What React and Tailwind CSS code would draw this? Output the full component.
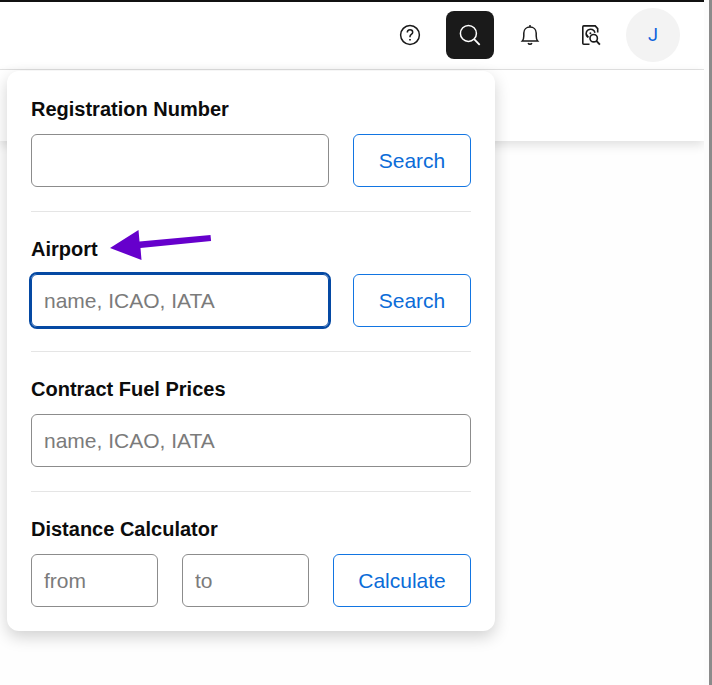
import React from "react";

const field =
  "h-[53px] w-full min-w-0 rounded-md border border-[#8c8c8c] bg-white px-3 text-[21px] text-[#222] placeholder:text-[#7b7b7b] outline-none";
const activeField =
  "h-[53px] w-full min-w-0 rounded-md border border-[#0549a3] bg-white px-3 text-[21px] text-[#222] placeholder:text-[#7b7b7b] outline-2 outline-[#0549a3]";
const action =
  "h-[53px] shrink-0 rounded-md border border-[#1275e2] bg-white text-[21px] text-[#0b6cd8]";
const iconButton = "flex size-12 items-center justify-center rounded-lg text-[#1a1a1a]";

function HelpIcon() {
  return (
    <svg width="24" height="24" viewBox="0 0 24 24" fill="none" stroke="currentColor" strokeWidth="1.5" aria-hidden="true">
      <circle cx="12" cy="12" r="9.4" />
      <path d="M9.3 9.5c0-1.700 1.100-2.800 2.700-2.800s2.700 1.100 2.700 2.500c0 2.200-2.700 2.200-2.700 4.300v.8" />
      <path d="M12 15.900v1.700" strokeWidth="1.700" />
    </svg>
  );
}

function SearchIcon() {
  return (
    <svg width="24" height="24" viewBox="0 0 24 24" fill="none" stroke="currentColor" strokeWidth="1.5" aria-hidden="true">
      <circle cx="10.400" cy="10.400" r="8" />
      <path d="m16.100 16.100 5.600 5.700" strokeWidth="1.800" />
    </svg>
  );
}

function BellIcon() {
  return (
    <svg width="24" height="24" viewBox="0 0 24 24" fill="none" stroke="currentColor" strokeWidth="1.500" aria-hidden="true">
      <path d="M12 1.900v2" />
      <path d="M4.300 17.900h15.400c-1.200-1.300-1.500-2.800-1.500-4.900v-3c0-3.500-2.600-6-6.200-6S5.800 6.500 5.800 10v3c0 2.100-.3 3.600-1.500 4.900Z" />
      <path d="M10.200 20c.3.900.9 1.300 1.800 1.300s1.500-.4 1.800-1.300" strokeWidth="1.600" />
    </svg>
  );
}

function RecordSearchIcon() {
  return (
    <svg width="24" height="24" viewBox="0 0 24 24" fill="none" stroke="currentColor" strokeWidth="1.600" aria-hidden="true">
      <path d="M11.500 21.200H5.800c-.6 0-1-.4-1-1V3.900c0-.6.4-1 1-1h11.400l2.500 2.700v4" />
      <path d="M9.900 14.300A4.500 4.500 0 1 1 17 9.700" />
      <path d="M8.200 11.200l2.300 3.200" />
      <circle cx="12.400" cy="10.300" r="1" fill="currentColor" stroke="none" />
      <circle cx="15.700" cy="15.200" r="3.700" />
      <path d="m18.300 17.900 3.600 3.700" strokeWidth="1.900" />
    </svg>
  );
}

function Header() {
  return (
    <header className="flex items-center justify-end gap-3 border-t-2 border-b border-t-[#111] border-b-[#e3e3e3] bg-white pt-[6px] pr-6 pb-[7px]">
      <button type="button" aria-label="Help" className={iconButton}>
        <HelpIcon />
      </button>
      <button type="button" aria-label="Search" className="flex size-12 items-center justify-center rounded-lg bg-[#1a1a1a] text-white">
        <SearchIcon />
      </button>
      <button type="button" aria-label="Notifications" className={iconButton}>
        <BellIcon />
      </button>
      <button type="button" aria-label="Record lookup" className={iconButton}>
        <RecordSearchIcon />
      </button>
      <button type="button" aria-label="Account" className="flex size-[54px] items-center justify-center rounded-full bg-[#f3f3f3] font-[Roboto,sans-serif] text-lg text-[#0b62dd]">
        J
      </button>
    </header>
  );
}

function Section({ id, title, children }) {
  return (
    <section className="border-b border-[#e5e5e5] pt-[23px] pb-6 last:border-b-0">
      <label htmlFor={id} className="mb-[11px] block w-fit text-xl leading-7 font-bold text-[#0c0c0c]">
        {title}
      </label>
      <div className="flex gap-6">{children}</div>
    </section>
  );
}

function Pointer() {
  return (
    <svg className="pointer-events-none absolute top-[158px] left-[103px]" width="104" height="32" viewBox="0 0 104 32" fill="#6600cc" aria-hidden="true">
      <path d="M0 19 28.500 1l1 11.500 71-6.500.6 6L30.500 19l1 12Z" />
    </svg>
  );
}

function SearchPanel() {
  return (
    <div className="absolute top-[71px] left-[7px] w-[488px] max-w-full rounded-xl bg-white px-6 pt-px shadow-[0_6px_16px_rgba(0,0,0,0.18)]">
      <Pointer />
      <Section id="registration" title="Registration Number">
        <input id="registration" type="text" className={field} />
        <button type="button" className={`${action} w-[118px]`}>Search</button>
      </Section>
      <Section id="airport" title="Airport">
        <input id="airport" type="text" placeholder="name, ICAO, IATA" className={activeField} />
        <button type="button" className={`${action} w-[118px]`}>Search</button>
      </Section>
      <Section id="fuel" title="Contract Fuel Prices">
        <input id="fuel" type="text" placeholder="name, ICAO, IATA" className={field} />
      </Section>
      <Section id="from" title="Distance Calculator">
        <input id="from" type="text" placeholder="from" className={field} />
        <input type="text" aria-label="To" placeholder="to" className={field} />
        <button type="button" className={`${action} w-[138px]`}>Calculate</button>
      </Section>
    </div>
  );
}

export default function App() {
  return (
    <div className="flex min-h-screen bg-[#fcfcfc] font-['Liberation_Sans',Arial,sans-serif]">
      <main className="relative min-w-0 flex-1 overflow-hidden bg-[#fefefe]">
        <Header />
        <div className="h-[71px] bg-white shadow-[0_4px_10px_rgba(0,0,0,0.12)]" />
        <SearchPanel />
      </main>
      <div className="w-2 border-r-3 border-[#8b8b8b]" />
    </div>
  );
}
